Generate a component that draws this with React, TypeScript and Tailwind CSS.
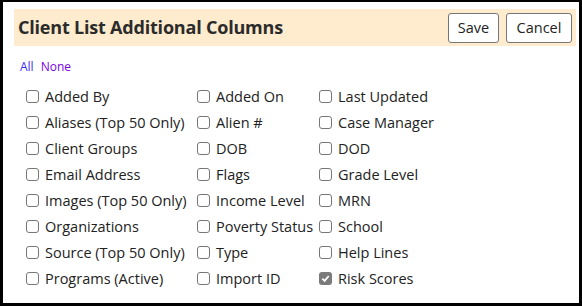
const columns: { label: string; checked?: boolean }[][] = [
  [
    { label: "Added By" },
    { label: "Aliases (Top 50 Only)" },
    { label: "Client Groups" },
    { label: "Email Address" },
    { label: "Images (Top 50 Only)" },
    { label: "Organizations" },
    { label: "Source (Top 50 Only)" },
    { label: "Programs (Active)" },
  ],
  [
    { label: "Added On" },
    { label: "Alien #" },
    { label: "DOB" },
    { label: "Flags" },
    { label: "Income Level" },
    { label: "Poverty Status" },
    { label: "Type" },
    { label: "Import ID" },
  ],
  [
    { label: "Last Updated" },
    { label: "Case Manager" },
    { label: "DOD" },
    { label: "Grade Level" },
    { label: "MRN" },
    { label: "School" },
    { label: "Help Lines" },
    { label: "Risk Scores", checked: true },
  ],
];

const Box = ({ checked }: { checked?: boolean }) =>
  checked ? (
    <span className="mb-[2px] flex h-[13px] w-[13px] shrink-0 items-center justify-center rounded-[3px] bg-[#7a7a7a]">
      <svg width="9" height="9" viewBox="0 0 10 10">
        <path d="M1.5 5.2 L4 7.6 L8.6 2.2" fill="none" stroke="white" strokeWidth="2" />
      </svg>
    </span>
  ) : (
    <span className="mb-[2px] h-[13px] w-[13px] shrink-0 rounded-[3px] border border-[#767676] bg-white" />
  );

export default function App() {
  return (
    <div className="h-[306px] w-[582px] border-t-2 border-r-[3px] border-b-[3px] border-l-[3px] border-black bg-white pt-[7px] pr-[3px] pl-[11px] font-['Open_Sans',sans-serif]">
      {/* header */}
      <div className="flex h-[37px] items-center justify-between bg-[#ffebcd] pr-[4px] pl-[4px]">
        <h2 className="text-[18px] font-bold tracking-[-0.2px] text-[#2b2b2b]">
          Client List Additional Columns
        </h2>
        <div className="flex gap-[7px]">
          <button className="h-[30px] w-[51px] rounded-[3px] border border-[#767676] bg-white text-[14.5px] text-[#222]">
            Save
          </button>
          <button className="h-[30px] w-[66px] rounded-[3px] border border-[#767676] bg-white text-[14.5px] text-[#222]">
            Cancel
          </button>
        </div>
      </div>

      <div className="mt-[13px] flex gap-[7px] pl-[6px] text-[12px] leading-[16px]">
        <a className="text-[#3b2df5]">All</a>
        <a className="text-[#7a00e6]">None</a>
      </div>

      {/* columns */}
      <div className="mt-[9px] flex pl-[12px] text-[14.5px] text-[#222]">
        {columns.map((col, i) => (
          <div key={i} className={i === 0 ? "w-[171px]" : i === 1 ? "w-[122px]" : "flex-1"}>
            {col.map((item) => (
              <div key={item.label} className="flex h-[26px] items-center gap-[6px]">
                <Box checked={item.checked} />
                <span className="whitespace-nowrap">{item.label}</span>
              </div>
            ))}
          </div>
        ))}
      </div>
    </div>
  );
}
